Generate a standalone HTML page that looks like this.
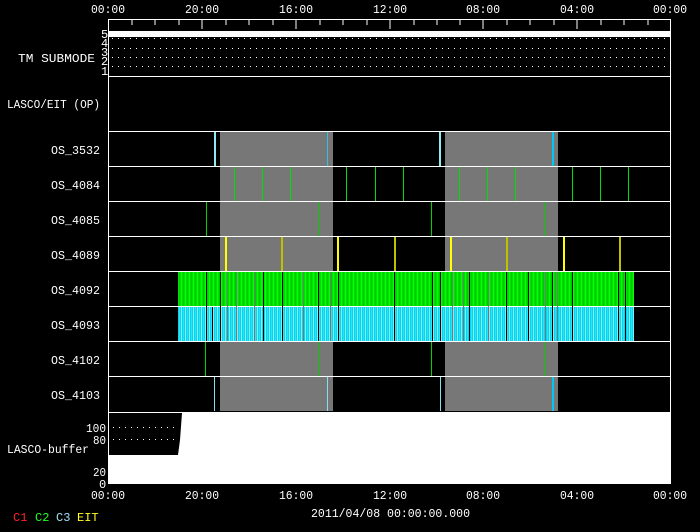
<!DOCTYPE html>
<html><head><meta charset="utf-8"><style>
html,body{margin:0;padding:0;background:#000;width:700px;height:532px;overflow:hidden}
svg{display:block}
text{font-family:"Liberation Mono","DejaVu Sans Mono",monospace;font-size:12px;fill:#fff}
</style></head><body>
<svg width="700" height="532" xmlns="http://www.w3.org/2000/svg">
<defs>
<pattern id="gp" x="0" y="0" width="4" height="10" patternUnits="userSpaceOnUse">
<rect width="4" height="10" fill="#00e000"/><rect x="1" width="1" height="10" fill="#00ff00"/><rect x="3" width="1" height="10" fill="#00c800"/>
</pattern>
<pattern id="cp" x="0" y="0" width="4" height="10" patternUnits="userSpaceOnUse">
<rect width="4" height="10" fill="#00d8f0"/><rect x="1" width="1" height="10" fill="#90e8f0"/><rect x="3" width="1" height="10" fill="#30e0f8"/>
</pattern>
</defs>
<text x="91" y="13" textLength="34" lengthAdjust="spacingAndGlyphs">00:00</text><text x="185" y="13" textLength="34" lengthAdjust="spacingAndGlyphs">20:00</text><text x="279" y="13" textLength="34" lengthAdjust="spacingAndGlyphs">16:00</text><text x="373" y="13" textLength="34" lengthAdjust="spacingAndGlyphs">12:00</text><text x="466" y="13" textLength="34" lengthAdjust="spacingAndGlyphs">08:00</text><text x="560" y="13" textLength="34" lengthAdjust="spacingAndGlyphs">04:00</text><text x="653" y="13" textLength="34" lengthAdjust="spacingAndGlyphs">00:00</text>
<text x="91" y="499" textLength="34" lengthAdjust="spacingAndGlyphs">00:00</text><text x="185" y="499" textLength="34" lengthAdjust="spacingAndGlyphs">20:00</text><text x="279" y="499" textLength="34" lengthAdjust="spacingAndGlyphs">16:00</text><text x="373" y="499" textLength="34" lengthAdjust="spacingAndGlyphs">12:00</text><text x="466" y="499" textLength="34" lengthAdjust="spacingAndGlyphs">08:00</text><text x="560" y="499" textLength="34" lengthAdjust="spacingAndGlyphs">04:00</text><text x="653" y="499" textLength="34" lengthAdjust="spacingAndGlyphs">00:00</text>
<rect x="220" y="132" width="113" height="279" fill="#777"/>
<rect x="445" y="132" width="113" height="279" fill="#777"/>
<rect x="108.5" y="19.5" width="562" height="464" fill="none" stroke="#fff"/>
<g stroke="#fff">
<path d="M132 20v5M155 20v5M179 20v5M226 20v5M249 20v5M273 20v5M320 20v5M343 20v5M367 20v5M414 20v5M437 20v5M460 20v5M507 20v5M530 20v5M554 20v5M601 20v5M624 20v5M648 20v5"/>
<path d="M202 20v9M296 20v9M390 20v9M483 20v9M577 20v9"/>
<path d="M108 76.5h563M108 131.5h563M108 166.5h563M108 201.5h563M108 236.5h563M108 271.5h563M108 306.5h563M108 341.5h563M108 376.5h563M108 412.5h563"/>
</g>
<rect x="109" y="31" width="562" height="6" fill="#fff"/>
<g stroke="#fff" stroke-dasharray="1 5">
<path d="M112 38.5h558M112 48.5h558M112 57.5h558M112 66.5h558"/>
</g>
<text x="18" y="62" textLength="77" lengthAdjust="spacingAndGlyphs">TM SUBMODE</text>
<text x="101" y="38" font-size="11">5</text><text x="101" y="47" font-size="11">4</text><text x="101" y="56" font-size="11">3</text><text x="101" y="65" font-size="11">2</text><text x="101" y="75" font-size="11">1</text>
<text x="7" y="108" textLength="93" lengthAdjust="spacingAndGlyphs">LASCO/EIT (OP)</text>
<text x="51" y="154" textLength="49" lengthAdjust="spacingAndGlyphs">OS_3532</text>
<text x="51" y="189" textLength="49" lengthAdjust="spacingAndGlyphs">OS_4084</text>
<text x="51" y="224" textLength="49" lengthAdjust="spacingAndGlyphs">OS_4085</text>
<text x="51" y="259" textLength="49" lengthAdjust="spacingAndGlyphs">OS_4089</text>
<text x="51" y="294" textLength="49" lengthAdjust="spacingAndGlyphs">OS_4092</text>
<text x="51" y="329" textLength="49" lengthAdjust="spacingAndGlyphs">OS_4093</text>
<text x="51" y="364" textLength="49" lengthAdjust="spacingAndGlyphs">OS_4102</text>
<text x="51" y="399" textLength="49" lengthAdjust="spacingAndGlyphs">OS_4103</text>
<g stroke-width="2">
<path d="M215 132v34M440 132v34" stroke="#90e8f0"/>
<path d="M553 132v34" stroke="#00c8f0"/>
</g>
<path d="M327.5 132v34" stroke="#30c0e0"/>
<path d="M234.5 167v34M262.5 167v34M290.5 167v34M346.5 167v34M375.5 167v34M403.5 167v34M459.5 167v34M487.5 167v34M515.5 167v34M572.5 167v34M600.5 167v34M628.5 167v34" stroke="#00e000"/>
<path d="M206.5 202v34M318.5 202v34M431.5 202v34M544.5 202v34" stroke="#00d000"/>
<g stroke-width="2">
<path d="M226 237v34M338 237v34M451 237v34M564 237v34" stroke="#ffff00"/>
<path d="M282 237v34M395 237v34M507 237v34M620 237v34" stroke="#c0c000"/>
</g>
<rect x="178" y="272" width="456" height="34" fill="url(#gp)"/>
<rect x="178" y="307" width="456" height="34" fill="url(#cp)"/>
<g stroke="#000" stroke-width="1">
<path d="M206.5 272v69M212.5 307v34M220.5 272v69M263.5 272v69M282.5 272v69M318.5 272v69M338.5 272v69M394.5 272v69M432.5 272v69M440.5 272v69M469.5 272v69M506.5 272v69M528.5 272v69M552.5 272v69M572.5 272v69M618.5 272v69M625.5 272v69"/>
</g>
<g stroke="#777" stroke-width="1">
<path d="M227.5 272v69M236.5 272v69M254.5 272v69M303.5 272v69M330.5 272v69M452.5 272v69M463.5 272v69M488.5 272v69M545.5 272v69M557.5 272v69"/>
</g>
<path d="M205.5 342v34M318.5 342v34M431.5 342v34M544.5 342v34" stroke="#00d000"/>
<path d="M214.5 377v34M327.5 377v34M440.5 377v34" stroke="#80e0f0"/>
<path d="M553 377v34" stroke="#00c8f0" stroke-width="2"/>
<rect x="108" y="413" width="563" height="71" fill="#fff"/>
<polygon points="109,413 182,413 180,440 178,455 109,455" fill="#000"/>
<g stroke="#fff" stroke-dasharray="1 5">
<path d="M113 427.5h64M113 439.5h64"/>
</g>
<text x="86" y="432" textLength="20" lengthAdjust="spacingAndGlyphs">100</text>
<text x="93" y="444" textLength="13" lengthAdjust="spacingAndGlyphs">80</text>
<text x="7" y="453" textLength="82" lengthAdjust="spacingAndGlyphs">LASCO-buffer</text>
<text x="93" y="476" textLength="13" lengthAdjust="spacingAndGlyphs">20</text>
<text x="99" y="488">0</text>
<text x="311" y="517" textLength="159" lengthAdjust="spacingAndGlyphs">2011/04/08 00:00:00.000</text>
<text x="13" y="521" font-size="10" style="fill:#ff2020">C1</text>
<text x="35" y="521" font-size="10" style="fill:#20ff20">C2</text>
<text x="56" y="521" font-size="10" style="fill:#a0e0f0">C3</text>
<text x="77" y="521" font-size="10" style="fill:#ffff20">EIT</text>
</svg>
</body></html>
